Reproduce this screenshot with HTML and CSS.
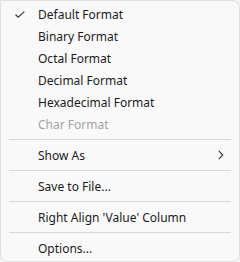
FILE: index.html
```html
<!DOCTYPE html>
<html lang="en">
<head>
    <meta charset="UTF-8">
    <title>Context Menu</title>
    <link rel="stylesheet" href="styles.css">
</head>
<body>
    <div class="menu">
        <!-- Format group -->
        <div class="item checked">
            <span class="mark">
                <svg width="10" height="7" viewBox="0 0 10 7"><path d="M0.5 3.5 L3.2 6.2 L9.3 0.6" fill="none" stroke="#333" stroke-width="1.1"/></svg>
            </span>
            <span class="label">Default Format</span>
        </div>
        <div class="item"><span class="mark"></span><span class="label">Binary Format</span></div>
        <div class="item"><span class="mark"></span><span class="label">Octal Format</span></div>
        <div class="item"><span class="mark"></span><span class="label">Decimal Format</span></div>
        <div class="item"><span class="mark"></span><span class="label">Hexadecimal Format</span></div>
        <div class="item disabled"><span class="mark"></span><span class="label">Char Format</span></div>

        <div class="sep"></div>

        <div class="item">
            <span class="mark"></span>
            <span class="label">Show As</span>
            <span class="arrow">
                <svg width="6" height="10" viewBox="0 0 6 10"><path d="M0.8 0.8 L4.8 5 L0.8 9.2" fill="none" stroke="#333" stroke-width="1.1"/></svg>
            </span>
        </div>

        <div class="sep"></div>

        <div class="item"><span class="mark"></span><span class="label">Save to File...</span></div>

        <div class="sep"></div>

        <div class="item"><span class="mark"></span><span class="label">Right Align 'Value' Column</span></div>

        <div class="sep"></div>

        <div class="item"><span class="mark"></span><span class="label">Options...</span></div>
    </div>
</body>
</html>
```

FILE: styles.css
```css
/* Global styles */
body {
    margin: 0;
    background-color: #f3f3f3;
    font-family: "Noto Sans", sans-serif;
    font-size: 12px;
}

/* Menu container */
.menu {
    box-sizing: border-box;
    width: 240px;
    height: 262px;
    padding: 2px 0;
    background-color: #f9f9f9;
    border: 1px solid #e0e0e0;
    border-radius: 0 8px 8px 8px;
}

/* Menu rows */
.item {
    display: flex;
    align-items: center;
    height: 22px;
    color: #1b1b1b;
}

.item.disabled {
    color: #a3a3a3;
}

.mark {
    display: flex;
    justify-content: center;
    width: 37px;
    padding-top: 1px;
}

.label {
    flex: 1;
    white-space: nowrap;
}

.arrow {
    display: flex;
    margin-right: 15px;
}

/* Separator */
.sep {
    height: 1px;
    margin: 4px 8px 4px 8px;
    background-color: #d7d7d7;
}
```
